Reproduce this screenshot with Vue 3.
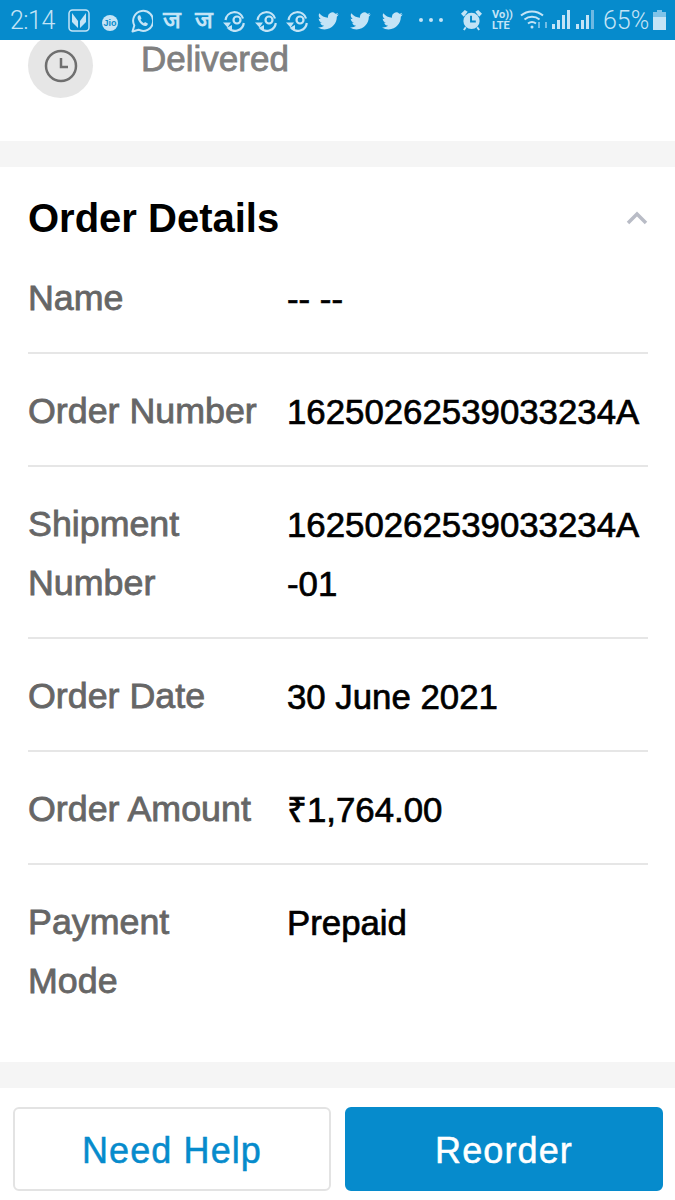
<template>
  <div class="phone">
    <div class="status">
      <span class="time">2:14</span>
      <svg class="ic" style="left:68px;top:9px" width="22" height="23" viewBox="0 0 22 23" fill="none">
        <rect x="1" y="1" width="20" height="21" rx="3.500" stroke="#c4e4f6" stroke-width="1.500" />
        <path d="M4 4l6 8v7l-6-6zM18 4l-6 8v7l6-6z" fill="#c4e4f6" />
      </svg>
      <div class="jio" style="left:102px">Jio</div>
      <svg class="ic" style="left:131px;top:9px" width="22" height="24" viewBox="0 0 22 24" fill="none">
        <path d="M1.500 22.500l1.800-6A10 10 0 1 1 7.500 20.700z" stroke="#c4e4f6" stroke-width="2" stroke-linejoin="round" />
        <path d="M7.500 6.500c-1.400 1-1.400 3.500.8 6.500s5 4.500 6.800 3.900c1.300-.4 1.800-1.500 1.700-2.500l-2.800-1.400-1.100 1.200c-1.400-.5-2.700-1.900-3.400-3.400l1-1.200L9.300 6.500c-.5-.4-1.200-.4-1.800 0z" fill="#c4e4f6" />
      </svg>
      <span class="ja" style="left:163px">ज</span>
      <span class="ja" style="left:195px">ज</span>
      <svg v-for="x in syncs" :key="x" class="ic" :style="{ left: x + 'px' }" width="23" height="23" viewBox="0 0 23 23" fill="none">
        <path d="M2.500 11a9 9 0 0 1 17.500-1.500M20.800 14a9 9 0 0 1-15 5.500" stroke="#c4e4f6" stroke-width="2.200" />
        <path d="M0 13.500h8l-3.500 5zM9 16v6l-5.500-3z" fill="#c4e4f6" />
        <circle cx="14" cy="11" r="3.500" stroke="#c4e4f6" stroke-width="2.200" />
      </svg>
      <svg v-for="x in birds" :key="x" class="ic" :style="{ left: x + 'px', top: '12px' }" width="21" height="18" viewBox="0 0 24 20">
        <path d="M23.600 2.400c-.9.400-1.800.6-2.800.8 1-.6 1.800-1.600 2.100-2.700-.9.600-2 1-3.100 1.200A4.900 4.900 0 0 0 11.500 6.200C7.500 6 3.900 4.100 1.500 1.100c-1.300 2.200-.6 5.100 1.500 6.500-.8 0-1.500-.2-2.200-.6 0 2.300 1.600 4.400 3.900 4.900-.7.200-1.500.2-2.200.1.600 2 2.400 3.400 4.600 3.400A9.900 9.900 0 0 1 0 17.400 14 14 0 0 0 7.500 19.600c9.100 0 14.300-7.700 14-14.600 1-.7 1.800-1.600 2.100-2.600z" fill="#c4e4f6" />
      </svg>
      <span class="dots"><i></i><i></i><i></i></span>
      <svg class="ic" style="left:460px;top:9px" width="23" height="22" viewBox="0 0 24 23" fill="#c4e4f6">
        <circle cx="12" cy="12.500" r="8.500" />
        <path d="M1 5l4-4 3 2-4 5zM23 5l-4-4-3 2 4 5z" />
        <path d="M6 19l-2 3M18 19l2 3" stroke="#c4e4f6" stroke-width="2" />
        <path d="M11.500 7v6h5" stroke="#068bcc" stroke-width="2" fill="none" />
      </svg>
      <span class="volte"><b>Vo))</b><b>LTE</b></span>
      <svg class="ic" style="left:520px;top:9px" width="28" height="20" viewBox="0 0 28 20" fill="none">
        <path d="M1 6.500a17 17 0 0 1 22 0M4.500 10.500a12 12 0 0 1 15 0M8 14.500a6.500 6.500 0 0 1 8 0" stroke="#c4e4f6" stroke-width="2" />
        <circle cx="12" cy="18" r="1.500" fill="#c4e4f6" />
        <path d="M19 13v6M26 19v-6" stroke="#7fc3e8" stroke-width="1.800" />
      </svg>
      <div class="bars" style="left:552px"><i style="height:5px" /><i style="height:9px" /><i style="height:14px" /><i style="height:19px" /></div>
      <div class="bars" style="left:576px"><i style="height:5px" /><i style="height:9px" /><i style="height:14px" /><i class="off" style="height:19px" /></div>
      <span class="pct">65%</span>
      <svg class="ic" style="left:652px;top:10px" width="15" height="20" viewBox="0 0 15 20">
        <path d="M5 0h5v2h4v6H1V2h4z" fill="#7fc3e8" />
        <rect x="1" y="7" width="13" height="13" fill="#c4e4f6" />
      </svg>
    </div>

    <div class="tracker">
      <div class="clock">
        <svg width="34" height="34" viewBox="0 0 34 34" fill="none" stroke="#6f6f6f" stroke-width="2.500">
          <circle cx="17" cy="17" r="15" />
          <path d="M17 9v9h7" />
        </svg>
      </div>
      <span class="state">Delivered</span>
    </div>

    <div class="band"></div>

    <section class="details">
      <div class="head">
        <h2>Order Details</h2>
        <svg width="22" height="14" viewBox="0 0 22 14" fill="none">
          <path d="M2 12l9-9 9 9" stroke="#b9bcc6" stroke-width="3.500" />
        </svg>
      </div>
      <div v-for="row in rows" :key="row.label" class="row">
        <div class="label">{{ row.label }}</div>
        <div class="value">{{ row.value }}</div>
      </div>
    </section>

    <div class="band"></div>

    <div class="actions">
      <button class="btn ghost">Need Help</button>
      <button class="btn solid">Reorder</button>
    </div>
  </div>
</template>

<script setup>
const syncs = [223, 255, 286]
const birds = [318, 350, 382]

const rows = [
  { label: 'Name', value: '-- --' },
  { label: 'Order Number', value: '16250262539033234A' },
  { label: 'Shipment Number', value: '16250262539033234A -01' },
  { label: 'Order Date', value: '30 June 2021' },
  { label: 'Order Amount', value: '₹1,764.00' },
  { label: 'Payment Mode', value: 'Prepaid' }
]
</script>

<style>
html,
body {
  margin: 0;
  background: #fff;
}
</style>

<style scoped>
.phone {
  width: 675px;
  height: 1200px;
  overflow: hidden;
  background: #fff;
  font-family: "Liberation Sans", Arial, sans-serif;
}

.status {
  position: relative;
  height: 40px;
  background: #068bcc;
  color: #c4e4f6;
}

.ic {
  position: absolute;
  top: 9px;
}

.time {
  position: absolute;
  left: 10px;
  top: 3px;
  font: 300 25px/36px Roboto, sans-serif;
  letter-spacing: -0.500px;
}

.jio {
  position: absolute;
  top: 15px;
  width: 16px;
  height: 16px;
  border-radius: 50%;
  background: #c4e4f6;
  color: #068bcc;
  font-size: 9px;
  font-weight: 700;
  line-height: 16px;
  text-align: center;
}

.ja {
  position: absolute;
  top: 4px;
  font-size: 24px;
  line-height: 32px;
  font-weight: 700;
  font-family: "DejaVu Sans", sans-serif;
}

.dots {
  position: absolute;
  left: 419px;
  top: 18px;
  display: flex;
  gap: 6px;
}

.dots i {
  width: 4px;
  height: 4px;
  border-radius: 50%;
  background: #c4e4f6;
}

.volte {
  position: absolute;
  left: 492px;
  top: 9px;
  display: flex;
  flex-direction: column;
  font: 11px/11px Roboto, sans-serif;
}

.volte b {
  font-weight: 700;
}

.bars {
  position: absolute;
  top: 10px;
  height: 19px;
  display: flex;
  align-items: flex-end;
  gap: 2px;
}

.bars i {
  width: 3px;
  background: #c4e4f6;
}

.bars i.off {
  background: #6db8e2;
}

.pct {
  position: absolute;
  left: 603px;
  top: 3px;
  font: 300 25px/36px Roboto, sans-serif;
}

.tracker {
  display: flex;
  height: 101px;
  padding-left: 28px;
  gap: 48px;
}

.clock {
  width: 65px;
  height: 65px;
  margin-top: -7px;
  border-radius: 50%;
  background: #e6e6e6;
  display: flex;
  align-items: center;
  justify-content: center;
}

.state {
  font-size: 35px;
  line-height: 38px;
  -webkit-text-stroke: 0.800px #808080;
  color: #808080;
}

.band {
  height: 26px;
  background: #f5f5f5;
}

.details {
  padding: 28px 27px 51px 28px;
}

.head {
  display: flex;
  align-items: center;
  justify-content: space-between;
  height: 46px;
}

h2 {
  margin: 0;
  font-size: 40px;
  font-weight: 700;
  color: #000;
}

.row {
  display: flex;
  padding: 28px 0 24px;
  border-bottom: 2px solid #e6e6e6;
  font-size: 34.800px;
  line-height: 59px;
}

.row:last-child {
  border-bottom: 0;
  padding-bottom: 0;
}

.label {
  width: 232px;
  margin-right: 27px;
  flex: none;
  color: #666;
  font-size: 35.800px;
  -webkit-text-stroke: 0.800px #666;
}

.value {
  color: #000;
  -webkit-text-stroke: 0.700px #000;
}

.actions {
  display: flex;
  gap: 14px;
  padding: 19px 12px 0 13px;
}

.btn {
  flex: 1 1 0;
  min-width: 0;
  height: 84px;
  padding: 4px 0 0;
  border-radius: 6px;
  border: 2px solid #e3e3e3;
  font: 400 36px "Liberation Sans", Arial, sans-serif;
  letter-spacing: 1.100px;
  -webkit-text-stroke: 0.500px currentColor;
}

.ghost {
  background: #fff;
  color: #068bcc;
}

.solid {
  background: #068bcc;
  border-color: #068bcc;
  color: #fff;
}
</style>
